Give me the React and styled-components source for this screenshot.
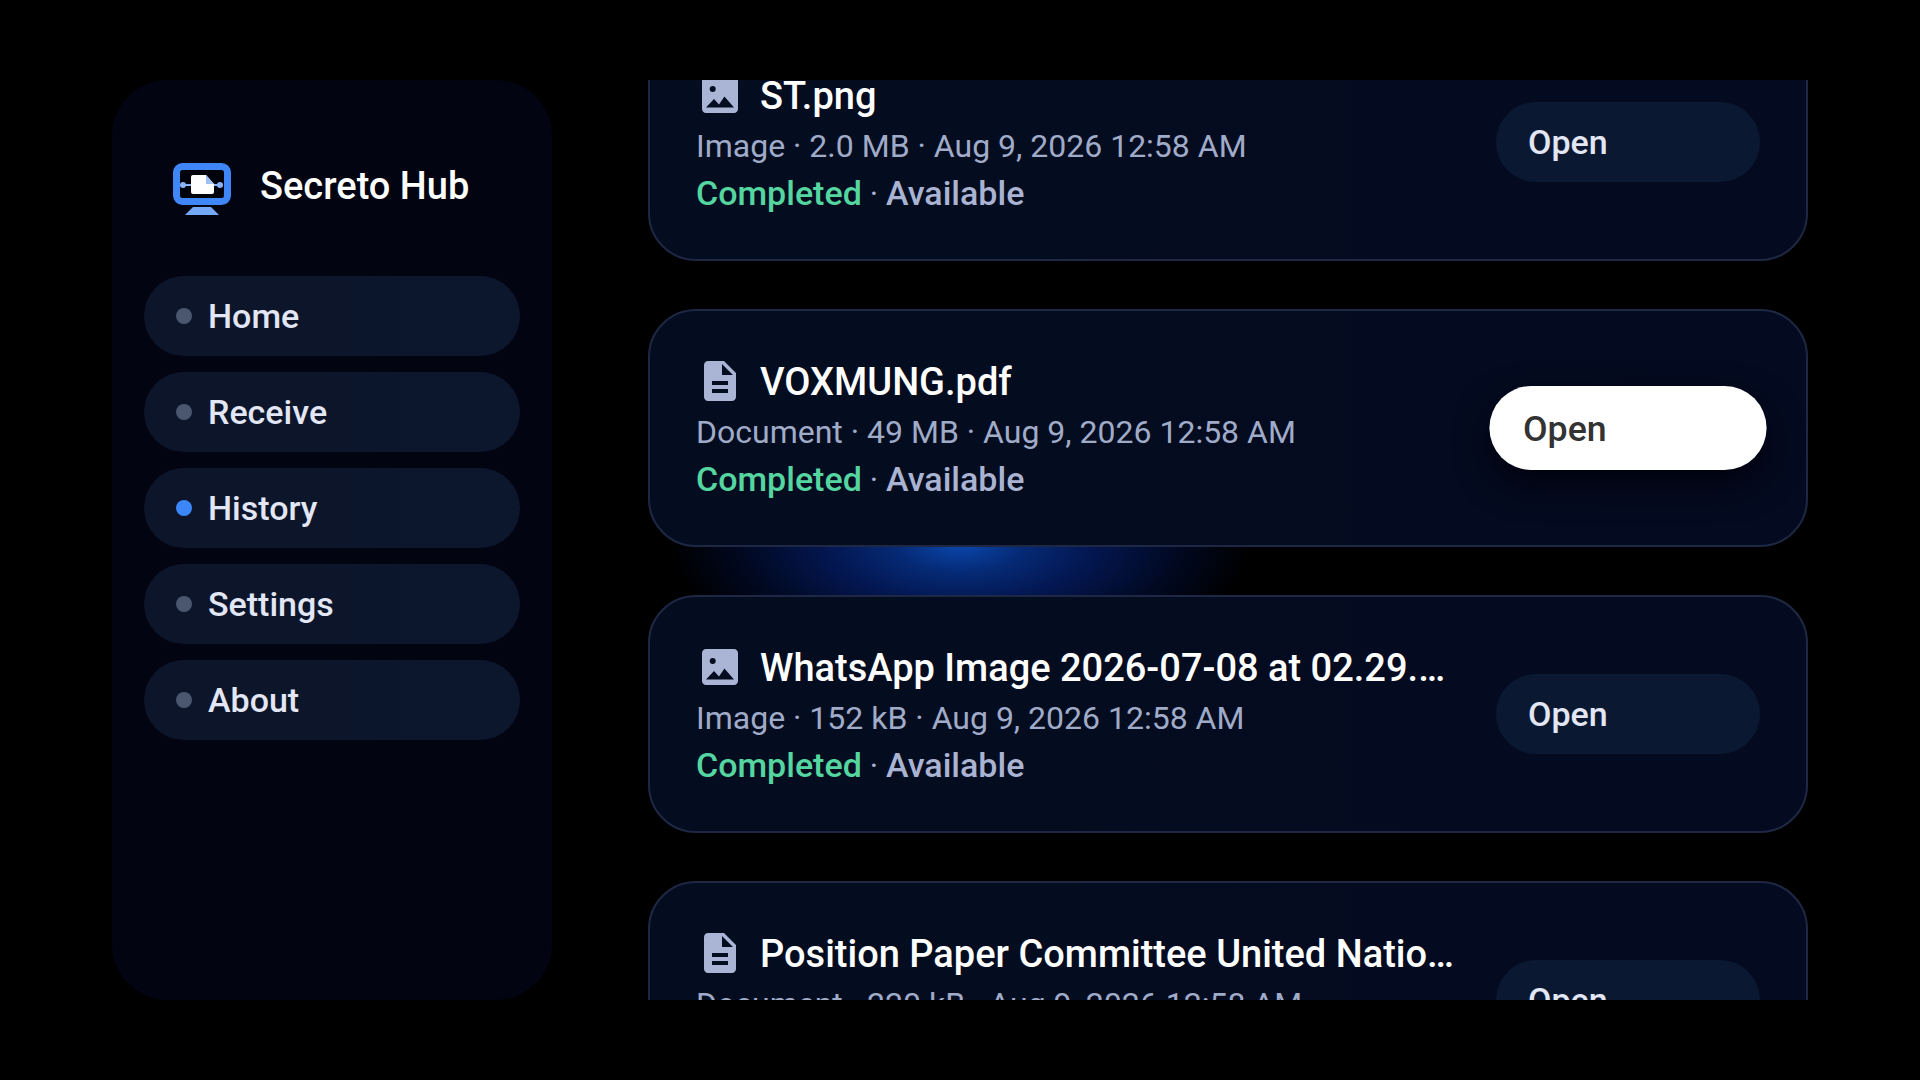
import styled, { createGlobalStyle } from "styled-components";

const GlobalStyle = createGlobalStyle`
  html, body {
    margin: 0;
    padding: 0;
    background: #000;
  }
  body {
    font-family: Roboto, "Liberation Sans", sans-serif;
  }
`;

const Screen = styled.div`
  width: 1920px;
  height: 1080px;
  box-sizing: border-box;
  padding: 80px 112px;
  display: flex;
  gap: 96px;
  background: #000;
  overflow: hidden;
`;

const Sidebar = styled.aside`
  width: 440px;
  height: 920px;
  flex: none;
  box-sizing: border-box;
  padding: 78px 32px 0;
  border-radius: 56px;
  background: #020411;
`;

const Brand = styled.div`
  display: flex;
  align-items: center;
  gap: 28px;
  height: 56px;
  padding-left: 28px;
  margin-bottom: 62px;
`;

const LogoSvg = styled.svg`
  flex: none;
  margin-top: 6px;
`;

const BrandName = styled.span`
  font-size: 38px;
  font-weight: 500;
  color: #fff;
`;

const Nav = styled.nav`
  display: flex;
  flex-direction: column;
  gap: 16px;
`;

const NavItem = styled.div`
  height: 80px;
  border-radius: 40px;
  background: linear-gradient(90deg, #0c1529, #0c162d);
  display: flex;
  align-items: center;
  gap: 16px;
  padding-left: 32px;
  font-size: 34px;
  font-weight: 500;
  color: #e2e6f5;
`;

const Dot = styled.span`
  width: 16px;
  height: 16px;
  border-radius: 50%;
  background: ${(p) => (p.$active ? "#3b86f8" : "#4b566f")};
`;

const Main = styled.main`
  position: relative;
  width: 1160px;
  height: 920px;
  overflow: hidden;
`;

const Glow = styled.div`
  position: absolute;
  left: 0;
  top: 464px;
  width: 624px;
  height: 60px;
  background: radial-gradient(ellipse 290px 130px at 50% 0, #0a47ad 0%, #052a75 22%, #031650 46%, #010a26 72%, transparent 100%);
`;

const List = styled.div`
  position: relative;
  display: flex;
  flex-direction: column;
  gap: 48px;
  margin-top: -57px;
`;

const Card = styled.div`
  height: 238px;
  flex: none;
  box-sizing: border-box;
  padding: 0 46px;
  border: 2px solid #1e2844;
  border-radius: 48px;
  background: linear-gradient(90deg, #040d20, #040a20);
  display: flex;
  align-items: center;
  justify-content: space-between;
`;

const Info = styled.div`
  display: flex;
  flex-direction: column;
  width: 764px;
  padding-top: 4px;
`;

const TitleRow = styled.div`
  display: flex;
  align-items: center;
  gap: 16px;
  height: 48px;
  margin-bottom: 4px;
`;

const Title = styled.span`
  flex: 1;
  min-width: 0;
  padding-top: 2px;
  font-size: 38px;
  font-weight: 500;
  color: #fff;
  white-space: nowrap;
  overflow: hidden;
  text-overflow: ellipsis;
`;

const Meta = styled.div`
  font-size: 32px;
  line-height: 46px;
  margin-bottom: 1px;
  color: #a0abc8;
  white-space: nowrap;
`;

const Status = styled.div`
  font-size: 34px;
  line-height: 46px;
  font-weight: 500;
  color: #aab4d2;
  white-space: nowrap;
`;

const Completed = styled.span`
  color: #55d6a0;
`;

const Separator = styled.span`
  font-size: 32px;
  font-weight: 400;
`;

const OpenButton = styled.button`
  flex: none;
  width: 264px;
  height: 80px;
  box-sizing: border-box;
  padding: 0 32px;
  border: 0;
  border-radius: 40px;
  text-align: left;
  font-family: inherit;
  font-size: 34px;
  font-weight: 500;
  color: ${(p) => (p.$focused ? "#333" : "#e2e6f5")};
  background: ${(p) => (p.$focused ? "#fff" : "#0b1832")};
  transform: ${(p) => (p.$focused ? "scale(1.05)" : "none")};
  box-shadow: ${(p) => (p.$focused ? "0 14px 32px rgba(0, 0, 10, 0.85)" : "none")};
`;

const FileSvg = styled.svg`
  flex: none;
`;

function LogoIcon() {
  return (
    <LogoSvg width="60" height="54" viewBox="0 0 60 54">
      <rect x="4.5" y="4.5" width="51" height="35" rx="6" fill="#00020c" stroke="#3f86f7" strokeWidth="7" />
      <path d="M21 45h18l8 8H13z" fill="#74a9fa" />
      <path d="M11 23h37" stroke="#8ab4fa" strokeWidth="2" />
      <circle cx="11" cy="23" r="3" fill="#8ab4fa" />
      <circle cx="48" cy="23" r="3" fill="#8ab4fa" />
      <path d="M19 15a2 2 0 0 1 2-2h13l8 9v8a2 2 0 0 1-2 2H21a2 2 0 0 1-2-2z" fill="#fff" />
      <path d="M34 13l8 9h-8z" fill="#9fc0f5" />
    </LogoSvg>
  );
}

function DocIcon() {
  return (
    <FileSvg width="48" height="48" viewBox="0 0 24 24">
      <path
        fill="#aab4d4"
        d="M14 2H6c-1.1 0-2 .9-2 2v16c0 1.1.9 2 2 2h12c1.1 0 2-.9 2-2V8l-6-6zm2 16H8v-2h8v2zm0-4H8v-2h8v2zm-3-5V3.5L18.5 9H13z"
      />
    </FileSvg>
  );
}

function ImageIcon() {
  return (
    <FileSvg width="48" height="48" viewBox="0 0 24 24">
      <path
        fill="#aab4d4"
        fillRule="evenodd"
        d="M5 3h14c1.1 0 2 .9 2 2v14c0 1.1-.9 2-2 2H5c-1.1 0-2-.9-2-2V5c0-1.1.9-2 2-2zm3.35 4.5a1.5 1.5 0 1 0 0 3 1.5 1.5 0 0 0 0-3zM5 18.3h14l-4.8-5.6-2.7 4.1L9 14z"
      />
    </FileSvg>
  );
}

const navItems = ["Home", "Receive", "History", "Settings", "About"];

const files = [
  { name: "ST.png", kind: "Image", size: "2.0 MB" },
  { name: "VOXMUNG.pdf", kind: "Document", size: "49 MB", focused: true },
  { name: "WhatsApp Image 2026-07-08 at 02.29.43.jpeg", kind: "Image", size: "152 kB" },
  { name: "Position Paper Committee United Nations.pdf", kind: "Document", size: "220 kB" },
];

export default function App() {
  return (
    <>
      <GlobalStyle />
      <Screen>
        <Sidebar>
          <Brand>
            <LogoIcon />
            <BrandName>Secreto Hub</BrandName>
          </Brand>
          <Nav>
            {navItems.map((item) => (
              <NavItem key={item}>
                <Dot $active={item === "History"} />
                {item}
              </NavItem>
            ))}
          </Nav>
        </Sidebar>
        <Main>
          <Glow />
          <List>
            {files.map((file) => (
              <Card key={file.name}>
                <Info>
                  <TitleRow>
                    {file.kind === "Image" ? <ImageIcon /> : <DocIcon />}
                    <Title>{file.name}</Title>
                  </TitleRow>
                  <Meta>
                    {file.kind} · {file.size} · Aug 9, 2026 12:58 AM
                  </Meta>
                  <Status>
                    <Completed>Completed</Completed>
                    <Separator> · </Separator>
                    Available
                  </Status>
                </Info>
                <OpenButton $focused={file.focused}>Open</OpenButton>
              </Card>
            ))}
          </List>
        </Main>
      </Screen>
    </>
  );
}
